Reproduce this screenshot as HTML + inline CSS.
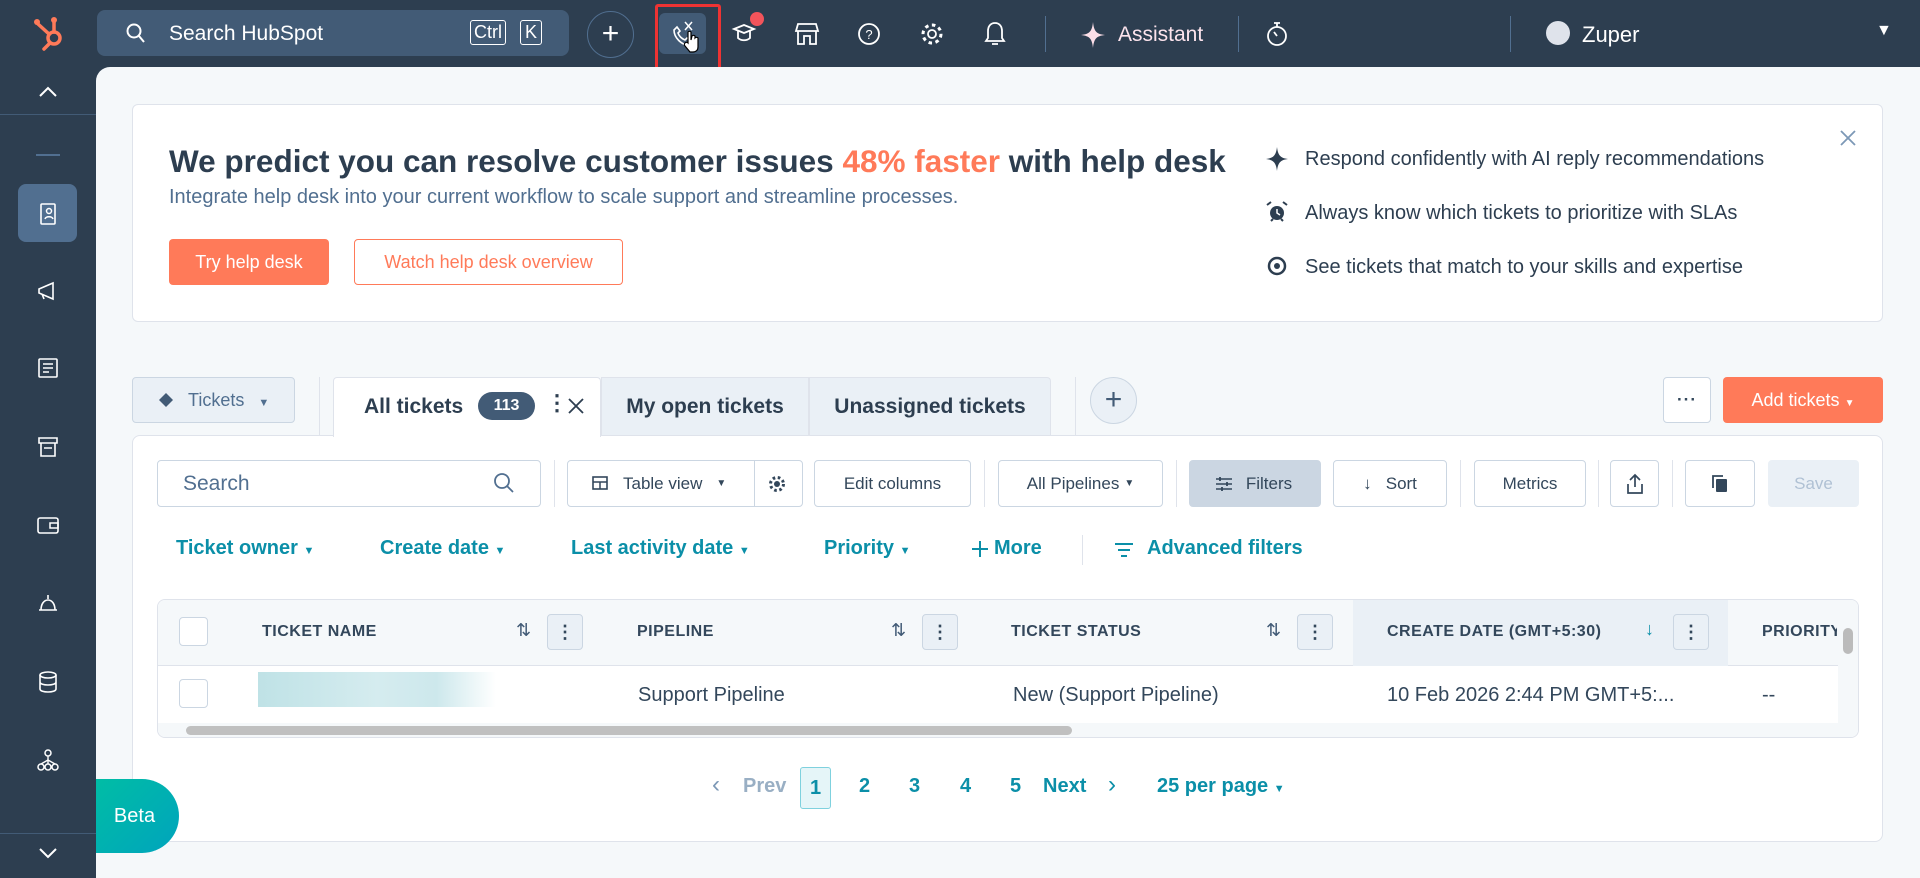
<!DOCTYPE html>
<html><head><meta charset="utf-8"><style>
*{box-sizing:border-box;margin:0;padding:0}
body{width:1920px;height:878px;overflow:hidden;background:#2d3e50;font-family:"Liberation Sans",sans-serif;color:#33475b;position:relative}
.a{position:absolute}
.top{left:0;top:0;width:1920px;height:67px;background:#2d3e50}
.main{left:96px;top:67px;width:1824px;height:811px;background:#f5f8fa;border-top-left-radius:14px}
.card{background:#fff;border:1px solid #dfe3eb;border-radius:6px}
.btn{border:1px solid #cbd6e2;background:#fff;border-radius:4px;font-size:17px;color:#33475b;display:flex;align-items:center;justify-content:center}
.fl{color:#0b8fa8;font-weight:bold;font-size:20px;top:537px}
.th{font-size:16px;font-weight:bold;letter-spacing:.5px;color:#33475b;top:623px}
.mb{width:36px;height:36px;border:1px solid #cbd6e2;border-radius:4px;background:#eaf0f6;top:614px;text-align:center;line-height:34px;font-weight:bold;font-size:18px}
.td{font-size:20px;top:684px;color:#33475b}
.pg{font-size:20px;font-weight:bold;color:#0b8fa8;top:775px}
.sic{left:33px;width:30px;height:30px}
</style></head><body>
<div class="a top"></div>
<svg class="a" style="left:32px;top:14px" width="36" height="38" viewBox="0 0 36 38"><g stroke="#ff7a59" stroke-width="3.5" fill="none" stroke-linecap="round"><circle cx="22" cy="24" r="6"/><line x1="22" y1="18" x2="22" y2="8"/><line x1="17" y1="20" x2="6" y2="10"/><line x1="18" y1="29" x2="12" y2="35"/></g><circle cx="22" cy="6" r="3" fill="#ff7a59"/><circle cx="5" cy="8" r="3" fill="#ff7a59"/></svg>
<div class="a" style="left:97px;top:10px;width:472px;height:46px;background:#425b76;border-radius:8px"></div>
<svg class="a" style="left:124px;top:21px" width="24" height="24" viewBox="0 0 24 24"><circle cx="10" cy="10" r="6.5" stroke="#fff" stroke-width="2" fill="none"/><line x1="15" y1="15" x2="20" y2="21" stroke="#fff" stroke-width="2"/></svg>
<div class="a" style="left:169px;top:22px;color:#fff;font-size:21px">Search HubSpot</div>
<div class="a" style="left:470px;top:20px;border:1.5px solid #fff;border-radius:3px;color:#fff;font-size:18px;padding:0 3px;height:25px;line-height:22px">Ctrl</div>
<div class="a" style="left:520px;top:20px;border:1.5px solid #fff;border-radius:3px;color:#fff;font-size:18px;padding:0 4px;height:25px;line-height:22px">K</div>
<div class="a" style="left:587px;top:11px;width:47px;height:47px;border:1px solid #516f90;border-radius:50%;color:#fff;font-size:30px;text-align:center;line-height:44px">+</div>
<div class="a" style="left:659px;top:13px;width:47px;height:41px;background:#425b76;border-radius:6px"></div>
<div class="a" style="left:655px;top:4px;width:66px;height:73px;border:3px solid #e33;border-radius:3px"></div>
<svg class="a" style="left:668px;top:18px" width="36" height="36" viewBox="0 0 36 36"><path d="M6 12c0 8 8 15 14 15l3-4-4-3-2 2c-3-1-6-4-7-7l2-2-3-4z" stroke="#fff" stroke-width="1.6" fill="none"/><path d="M17 4l7 8M24 4l-7 8" stroke="#fff" stroke-width="1.5"/><path d="M20 20v-6a2 2 0 0 1 3 0v8l1-4a2 2 0 0 1 3 0v2a2 2 0 0 1 3 0v9c0 3-2 5-5 5h-3l-5-6a2 2 0 0 1 3-3z" fill="#fff" stroke="#000" stroke-width="1.2"/></svg>
<svg class="a" style="left:731px;top:20px" width="28" height="28" viewBox="0 0 28 28"><path d="M3 9l10-4 10 4-10 4z M7 11v7c3 3 9 3 12 0v-7" stroke="#fff" stroke-width="1.8" fill="none"/></svg>
<div class="a" style="left:750px;top:12px;width:14px;height:14px;background:#f2545b;border-radius:50%"></div>
<svg class="a" style="left:794px;top:20px" width="26" height="28" viewBox="0 0 26 28"><path d="M4 4h18l2 7H2zM4 11v13h6v-8h6v8h6V11" stroke="#fff" stroke-width="1.8" fill="none"/></svg>
<svg class="a" style="left:856px;top:21px" width="26" height="26" viewBox="0 0 26 26"><circle cx="13" cy="13" r="10" stroke="#fff" stroke-width="1.8" fill="none"/><text x="13" y="18" font-size="13" fill="#fff" text-anchor="middle" font-family="Liberation Sans">?</text></svg>
<svg class="a" style="left:919px;top:21px" width="26" height="26" viewBox="0 0 26 26"><circle cx="13" cy="13" r="4" stroke="#fff" stroke-width="1.8" fill="none"/><circle cx="13" cy="13" r="9" stroke="#fff" stroke-width="3" stroke-dasharray="3.5 3.5" fill="none"/></svg>
<svg class="a" style="left:983px;top:20px" width="24" height="28" viewBox="0 0 24 28"><path d="M12 3c-5 0-7 4-7 8v7l-2 3h18l-2-3v-7c0-4-2-8-7-8zM9 24h6" stroke="#fff" stroke-width="1.8" fill="none"/></svg>
<div class="a" style="left:1045px;top:16px;width:1px;height:36px;background:#516f90"></div>
<svg class="a" style="left:1081px;top:22px" width="24" height="26" viewBox="0 0 24 26"><path d="M12 0C13 9 15 12 24 13 15 14 13 17 12 26 11 17 9 14 0 13 9 12 11 9 12 0z" fill="#fcdfe8"/></svg>
<div class="a" style="left:1118px;top:23px;color:#fde4ed;font-size:21px">Assistant</div>
<div class="a" style="left:1238px;top:16px;width:1px;height:36px;background:#516f90"></div>
<svg class="a" style="left:1264px;top:19px" width="26" height="30" viewBox="0 0 26 30"><circle cx="13" cy="17" r="9" stroke="#fff" stroke-width="1.8" fill="none"/><path d="M10 4h6M13 4v4M13 17l-3-4" stroke="#fff" stroke-width="1.8"/></svg>
<div class="a" style="left:1510px;top:16px;width:1px;height:36px;background:#516f90"></div>
<div class="a" style="left:1546px;top:21px;width:24px;height:24px;border-radius:50%;background:#dfe3eb"></div>
<div class="a" style="left:1582px;top:22px;color:#fff;font-size:22px">Zuper</div>
<div class="a" style="left:1876px;top:22px;color:#fff;font-size:16px">▼</div>

<svg class="a" style="left:36px;top:82px" width="24" height="20" viewBox="0 0 24 20"><path d="M4 14l8-8 8 8" stroke="#fff" stroke-width="2" fill="none"/></svg>
<div class="a" style="left:0;top:114px;width:96px;height:1px;background:#425b76"></div>
<div class="a" style="left:36px;top:154px;width:24px;height:2px;background:#516f90"></div>
<div class="a" style="left:18px;top:184px;width:59px;height:58px;background:#516f90;border-radius:8px"></div>
<svg class="a sic" style="top:199px" viewBox="0 0 30 30"><rect x="8" y="5" width="14" height="20" rx="1" stroke="#fff" stroke-width="1.6" fill="none"/><circle cx="16" cy="12" r="2.5" stroke="#fff" stroke-width="1.5" fill="none"/><path d="M12 20c1-3 7-3 8 0" stroke="#fff" stroke-width="1.5" fill="none"/></svg>
<svg class="a sic" style="top:276px" viewBox="0 0 30 30"><path d="M6 13l14-6v16L6 17zM9 18l2 5" stroke="#fff" stroke-width="1.6" fill="none"/></svg>
<svg class="a sic" style="top:353px" viewBox="0 0 30 30"><rect x="6" y="6" width="18" height="18" rx="1" stroke="#fff" stroke-width="1.6" fill="none"/><path d="M10 11h10M10 15h10M10 19h6" stroke="#fff" stroke-width="1.5"/></svg>
<svg class="a sic" style="top:432px" viewBox="0 0 30 30"><path d="M6 6h18v5H6zM8 11v13h14V11M11 16h8" stroke="#fff" stroke-width="1.6" fill="none"/></svg>
<svg class="a sic" style="top:510px" viewBox="0 0 30 30"><rect x="5" y="8" width="20" height="15" rx="2" stroke="#fff" stroke-width="1.6" fill="none"/><path d="M17 13h8v5h-8z" stroke="#fff" stroke-width="1.5" fill="none"/></svg>
<svg class="a sic" style="top:588px" viewBox="0 0 30 30"><path d="M6 22h18M8 22c0-6 3-10 7-10s7 4 7 10M15 7v4" stroke="#fff" stroke-width="1.6" fill="none"/></svg>
<svg class="a sic" style="top:667px" viewBox="0 0 30 30"><ellipse cx="15" cy="8" rx="8" ry="3" stroke="#fff" stroke-width="1.6" fill="none"/><path d="M7 8v14c0 4 16 4 16 0V8M7 15c0 4 16 4 16 0" stroke="#fff" stroke-width="1.6" fill="none"/></svg>
<svg class="a sic" style="top:745px" viewBox="0 0 30 30"><circle cx="15" cy="8" r="3" stroke="#fff" stroke-width="1.5" fill="none"/><circle cx="8" cy="22" r="3" stroke="#fff" stroke-width="1.5" fill="none"/><circle cx="22" cy="22" r="3" stroke="#fff" stroke-width="1.5" fill="none"/><circle cx="15" cy="22" r="3" stroke="#fff" stroke-width="1.5" fill="none"/><path d="M15 11v8M15 15l-7 4M15 15l7 4" stroke="#fff" stroke-width="1.4"/></svg>
<div class="a" style="left:0;top:833px;width:96px;height:1px;background:#425b76"></div>
<svg class="a" style="left:36px;top:843px" width="24" height="20" viewBox="0 0 24 20"><path d="M4 6l8 8 8-8" stroke="#fff" stroke-width="2" fill="none"/></svg>

<div class="a main"></div>
<div class="a card" style="left:132px;top:104px;width:1751px;height:218px"></div>
<div class="a" style="left:169px;top:143px;font-size:31.5px;font-weight:bold;color:#2d3e50;white-space:nowrap">We predict you can resolve customer issues <span style="color:#ff7a59">48% faster</span> with help desk</div>
<div class="a" style="left:169px;top:186px;font-size:20px;color:#516f90">Integrate help desk into your current workflow to scale support and streamline processes.</div>
<div class="a" style="left:169px;top:239px;width:160px;height:46px;background:#ff7a59;border-radius:4px;color:#fff;font-size:18px;text-align:center;line-height:46px">Try help desk</div>
<div class="a" style="left:354px;top:239px;width:269px;height:46px;border:1px solid #ff7a59;border-radius:4px;color:#ff7a59;font-size:18px;text-align:center;line-height:44px;background:#fff">Watch help desk overview</div>
<svg class="a" style="left:1266px;top:147px" width="22" height="24" viewBox="0 0 22 24"><path d="M11 0C12 8 14 11 22 12 14 13 12 16 11 24 10 16 8 13 0 12 8 11 10 8 11 0z" fill="#2d3e50"/></svg>
<svg class="a" style="left:1266px;top:201px" width="22" height="22" viewBox="0 0 22 22"><circle cx="11" cy="12" r="7" fill="#2d3e50"/><path d="M1 4l4-3M21 4l-4-3M5 20l2-2M17 20l-2-2" stroke="#2d3e50" stroke-width="2"/><path d="M11 8v4l3 2" stroke="#fff" stroke-width="1.5" fill="none"/></svg>
<svg class="a" style="left:1266px;top:255px" width="22" height="22" viewBox="0 0 22 22"><circle cx="11" cy="11" r="8" stroke="#2d3e50" stroke-width="2.5" fill="none"/><circle cx="11" cy="11" r="3" fill="#2d3e50"/></svg>
<div class="a" style="left:1305px;top:148px;font-size:20px;color:#2d3e50">Respond confidently with AI reply recommendations</div>
<div class="a" style="left:1305px;top:202px;font-size:20px;color:#2d3e50">Always know which tickets to prioritize with SLAs</div>
<div class="a" style="left:1305px;top:256px;font-size:20px;color:#2d3e50">See tickets that match to your skills and expertise</div>
<svg class="a" style="left:1838px;top:128px" width="20" height="20" viewBox="0 0 20 20"><path d="M3 3l14 14M17 3L3 17" stroke="#7c98b6" stroke-width="1.8"/></svg>

<div class="a" style="left:132px;top:377px;width:163px;height:46px;background:#eaf0f6;border:1px solid #cbd6e2;border-radius:4px;font-size:18px;color:#516f90;line-height:44px;padding-left:55px">Tickets<span style="font-size:11px;margin-left:14px">▼</span></div>
<svg class="a" style="left:158px;top:392px" width="16" height="16" viewBox="0 0 16 16"><path d="M8 1l7 7-7 7-7-7z" fill="#425b76"/></svg>
<div class="a" style="left:319px;top:377px;width:1px;height:58px;background:#dfe3eb"></div>
<div class="a card" style="left:132px;top:435px;width:1751px;height:407px;border-radius:8px"></div>
<div class="a" style="left:333px;top:377px;width:268px;height:60px;background:#fff;border:1px solid #dfe3eb;border-bottom:none;border-radius:4px 4px 0 0"></div>
<div class="a" style="left:364px;top:395px;font-size:21px;font-weight:bold;color:#2d3e50">All tickets</div>
<div class="a" style="left:478px;top:392px;width:57px;height:28px;background:#425b76;border-radius:14px;color:#fff;font-size:16px;font-weight:bold;text-align:center;line-height:28px">113</div>
<div class="a" style="left:546px;top:390px;font-size:22px;font-weight:bold;color:#2d3e50">⋮</div>
<svg class="a" style="left:567px;top:397px" width="18" height="18" viewBox="0 0 18 18"><path d="M2 2l14 14M16 2L2 16" stroke="#2d3e50" stroke-width="1.8"/></svg>
<div class="a" style="left:601px;top:377px;width:208px;height:58px;background:#eaf0f6;border:1px solid #dfe3eb;border-bottom:none;font-size:21px;font-weight:bold;color:#2d3e50;text-align:center;line-height:58px">My open tickets</div>
<div class="a" style="left:809px;top:377px;width:242px;height:58px;background:#eaf0f6;border:1px solid #dfe3eb;border-bottom:none;border-radius:0 4px 0 0;font-size:21px;font-weight:bold;color:#2d3e50;text-align:center;line-height:58px">Unassigned tickets</div>
<div class="a" style="left:1075px;top:377px;width:1px;height:58px;background:#dfe3eb"></div>
<div class="a" style="left:1090px;top:377px;width:47px;height:47px;border:1px solid #cbd6e2;border-radius:50%;background:#eaf0f6;color:#425b76;font-size:30px;text-align:center;line-height:43px">+</div>
<div class="a btn" style="left:1663px;top:377px;width:48px;height:46px;font-weight:bold;letter-spacing:1px">···</div>
<div class="a" style="left:1723px;top:377px;width:160px;height:46px;background:#ff7a59;border-radius:4px;color:#fff;font-size:18px;text-align:center;line-height:46px">Add tickets <span style="font-size:10px">▼</span></div>

<div class="a btn" style="left:157px;top:460px;width:384px;height:47px;justify-content:flex-start;padding-left:25px;font-size:21px;color:#516f90">Search</div>
<svg class="a" style="left:492px;top:471px" width="24" height="24" viewBox="0 0 24 24"><circle cx="10" cy="10" r="7" stroke="#516f90" stroke-width="1.8" fill="none"/><line x1="15" y1="15" x2="21" y2="21" stroke="#516f90" stroke-width="1.8"/></svg>
<div class="a" style="left:554px;top:460px;width:1px;height:47px;background:#dfe3eb"></div>
<div class="a btn" style="left:567px;top:460px;width:236px;height:47px;justify-content:flex-start;padding-left:55px">Table view<span style="font-size:10px;margin-left:14px">▼</span></div>
<svg class="a" style="left:592px;top:475px" width="16" height="16" viewBox="0 0 16 16"><rect x="1" y="2" width="14" height="12" stroke="#33475b" stroke-width="1.6" fill="none"/><path d="M1 7h14M8 7v7" stroke="#33475b" stroke-width="1.5"/></svg>
<div class="a" style="left:754px;top:460px;width:1px;height:47px;background:#cbd6e2"></div>
<svg class="a" style="left:767px;top:474px" width="20" height="20" viewBox="0 0 20 20"><circle cx="10" cy="10" r="3" fill="#33475b"/><circle cx="10" cy="10" r="6.5" stroke="#33475b" stroke-width="3" stroke-dasharray="2.6 2.6" fill="none"/></svg>
<div class="a btn" style="left:814px;top:460px;width:157px;height:47px">Edit columns</div>
<div class="a" style="left:984px;top:460px;width:1px;height:47px;background:#dfe3eb"></div>
<div class="a btn" style="left:998px;top:460px;width:165px;height:47px">All Pipelines <span style="font-size:10px;margin-left:5px">▼</span></div>
<div class="a" style="left:1176px;top:460px;width:1px;height:47px;background:#dfe3eb"></div>
<div class="a btn" style="left:1189px;top:460px;width:132px;height:47px;background:#cbd6e2;padding-left:28px">Filters</div>
<svg class="a" style="left:1214px;top:475px" width="20" height="18" viewBox="0 0 20 18"><path d="M2 4h16M2 9h16M2 14h16" stroke="#33475b" stroke-width="1.5"/><path d="M6 2v4M13 7v4M8 12v4" stroke="#33475b" stroke-width="1.8"/></svg>
<div class="a btn" style="left:1333px;top:460px;width:114px;height:47px">↓&nbsp;&nbsp;&nbsp;Sort</div>
<div class="a" style="left:1460px;top:460px;width:1px;height:47px;background:#dfe3eb"></div>
<div class="a btn" style="left:1474px;top:460px;width:112px;height:47px">Metrics</div>
<div class="a" style="left:1598px;top:460px;width:1px;height:47px;background:#dfe3eb"></div>
<div class="a btn" style="left:1610px;top:460px;width:49px;height:47px"><svg width="18" height="22" viewBox="0 0 18 22"><path d="M9 2v12M4 7l5-5 5 5M2 11v9h14v-9" stroke="#33475b" stroke-width="1.7" fill="none"/></svg></div>
<div class="a" style="left:1672px;top:460px;width:1px;height:47px;background:#dfe3eb"></div>
<div class="a btn" style="left:1685px;top:460px;width:70px;height:47px"><svg width="18" height="20" viewBox="0 0 18 20"><rect x="5" y="5" width="11" height="13" rx="1" fill="#33475b"/><path d="M2 14V2h10" stroke="#33475b" stroke-width="1.8" fill="none"/></svg></div>
<div class="a btn" style="left:1768px;top:460px;width:91px;height:47px;background:#eaf0f6;border-color:#eaf0f6;color:#b0c1d4">Save</div>

<div class="a fl" style="left:176px">Ticket owner <span style="font-size:11px">▼</span></div>
<div class="a fl" style="left:380px">Create date <span style="font-size:11px">▼</span></div>
<div class="a fl" style="left:571px">Last activity date <span style="font-size:11px">▼</span></div>
<div class="a fl" style="left:824px">Priority <span style="font-size:11px">▼</span></div>
<svg class="a" style="left:971px;top:540px" width="18" height="18" viewBox="0 0 18 18"><path d="M9 1v16M1 9h16" stroke="#0b8fa8" stroke-width="2"/></svg>
<div class="a fl" style="left:994px">More</div>
<div class="a" style="left:1082px;top:535px;width:1px;height:30px;background:#dfe3eb"></div>
<svg class="a" style="left:1114px;top:541px" width="20" height="18" viewBox="0 0 20 18"><path d="M1 3h18M4 9h12M7 15h6" stroke="#0b8fa8" stroke-width="2"/></svg>
<div class="a fl" style="left:1147px">Advanced filters</div>

<div class="a" style="left:157px;top:599px;width:1702px;height:139px;border:1px solid #dfe3eb;border-radius:8px;background:#fff;overflow:hidden">
 <div style="position:absolute;left:0;top:0;width:1702px;height:66px;background:#f5f8fa;border-bottom:1px solid #dfe3eb"></div>
 <div style="position:absolute;left:1195px;top:0;width:375px;height:66px;background:#eaf0f6"></div>
 <div style="position:absolute;left:0;top:123px;width:1702px;height:16px;background:#f5f8fa"></div>
 <div style="position:absolute;left:28px;top:126px;width:886px;height:9px;background:#c0c0c0;border-radius:5px"></div>
 <div style="position:absolute;left:1680px;top:0;width:22px;height:123px;background:#f5f8fa"></div>
 <div style="position:absolute;left:1685px;top:28px;width:10px;height:26px;background:#bbb;border-radius:5px"></div>
</div>
<div class="a" style="left:179px;top:617px;width:29px;height:29px;border:1px solid #cbd6e2;border-radius:4px;background:#fff"></div>
<div class="a" style="left:179px;top:679px;width:29px;height:29px;border:1px solid #cbd6e2;border-radius:4px;background:#fff"></div>
<div class="a th" style="left:262px">TICKET NAME</div>
<div class="a" style="left:516px;top:620px;font-size:18px;color:#425b76">⇅</div>
<div class="a mb" style="left:547px">⋮</div>
<div class="a th" style="left:637px">PIPELINE</div>
<div class="a" style="left:891px;top:620px;font-size:18px;color:#425b76">⇅</div>
<div class="a mb" style="left:922px">⋮</div>
<div class="a th" style="left:1011px">TICKET STATUS</div>
<div class="a" style="left:1266px;top:620px;font-size:18px;color:#425b76">⇅</div>
<div class="a mb" style="left:1297px">⋮</div>
<div class="a th" style="left:1387px">CREATE DATE (GMT+5:30)</div>
<div class="a" style="left:1645px;top:619px;font-size:18px;color:#0b8fa8">↓</div>
<div class="a mb" style="left:1673px">⋮</div>
<div class="a th" style="left:1762px;width:75px;overflow:hidden;white-space:nowrap">PRIORITY</div>
<div class="a" style="left:258px;top:672px;width:238px;height:35px;background:linear-gradient(90deg,#bfe2e6,#d5ecef 50%,#cde8ec 75%,#fff)"></div>
<div class="a td" style="left:638px">Support Pipeline</div>
<div class="a td" style="left:1013px">New (Support Pipeline)</div>
<div class="a td" style="left:1387px">10 Feb 2026 2:44 PM GMT+5:...</div>
<div class="a td" style="left:1762px">--</div>

<div class="a pg" style="left:712px;color:#7c98b6;font-weight:normal;font-size:24px;top:771px">‹</div>
<div class="a pg" style="left:743px;color:#99afc4">Prev</div>
<div class="a" style="left:800px;top:767px;width:31px;height:42px;border:1px solid #7fd1de;background:#e5f5f8;border-radius:3px;color:#0b8fa8;font-weight:bold;font-size:20px;text-align:center;line-height:40px">1</div>
<div class="a pg" style="left:859px">2</div>
<div class="a pg" style="left:909px">3</div>
<div class="a pg" style="left:960px">4</div>
<div class="a pg" style="left:1010px">5</div>
<div class="a pg" style="left:1043px">Next</div>
<div class="a pg" style="left:1108px;font-weight:normal;font-size:24px;top:771px">›</div>
<div class="a pg" style="left:1157px">25 per page <span style="font-size:11px">▼</span></div>

<div class="a" style="left:96px;top:779px;width:83px;height:74px;border-radius:0 37px 37px 0;background:linear-gradient(135deg,#00bda5,#00a4bd);color:#fff;font-size:20px;text-align:center;line-height:74px;padding-right:6px">Beta</div>
</body></html>
